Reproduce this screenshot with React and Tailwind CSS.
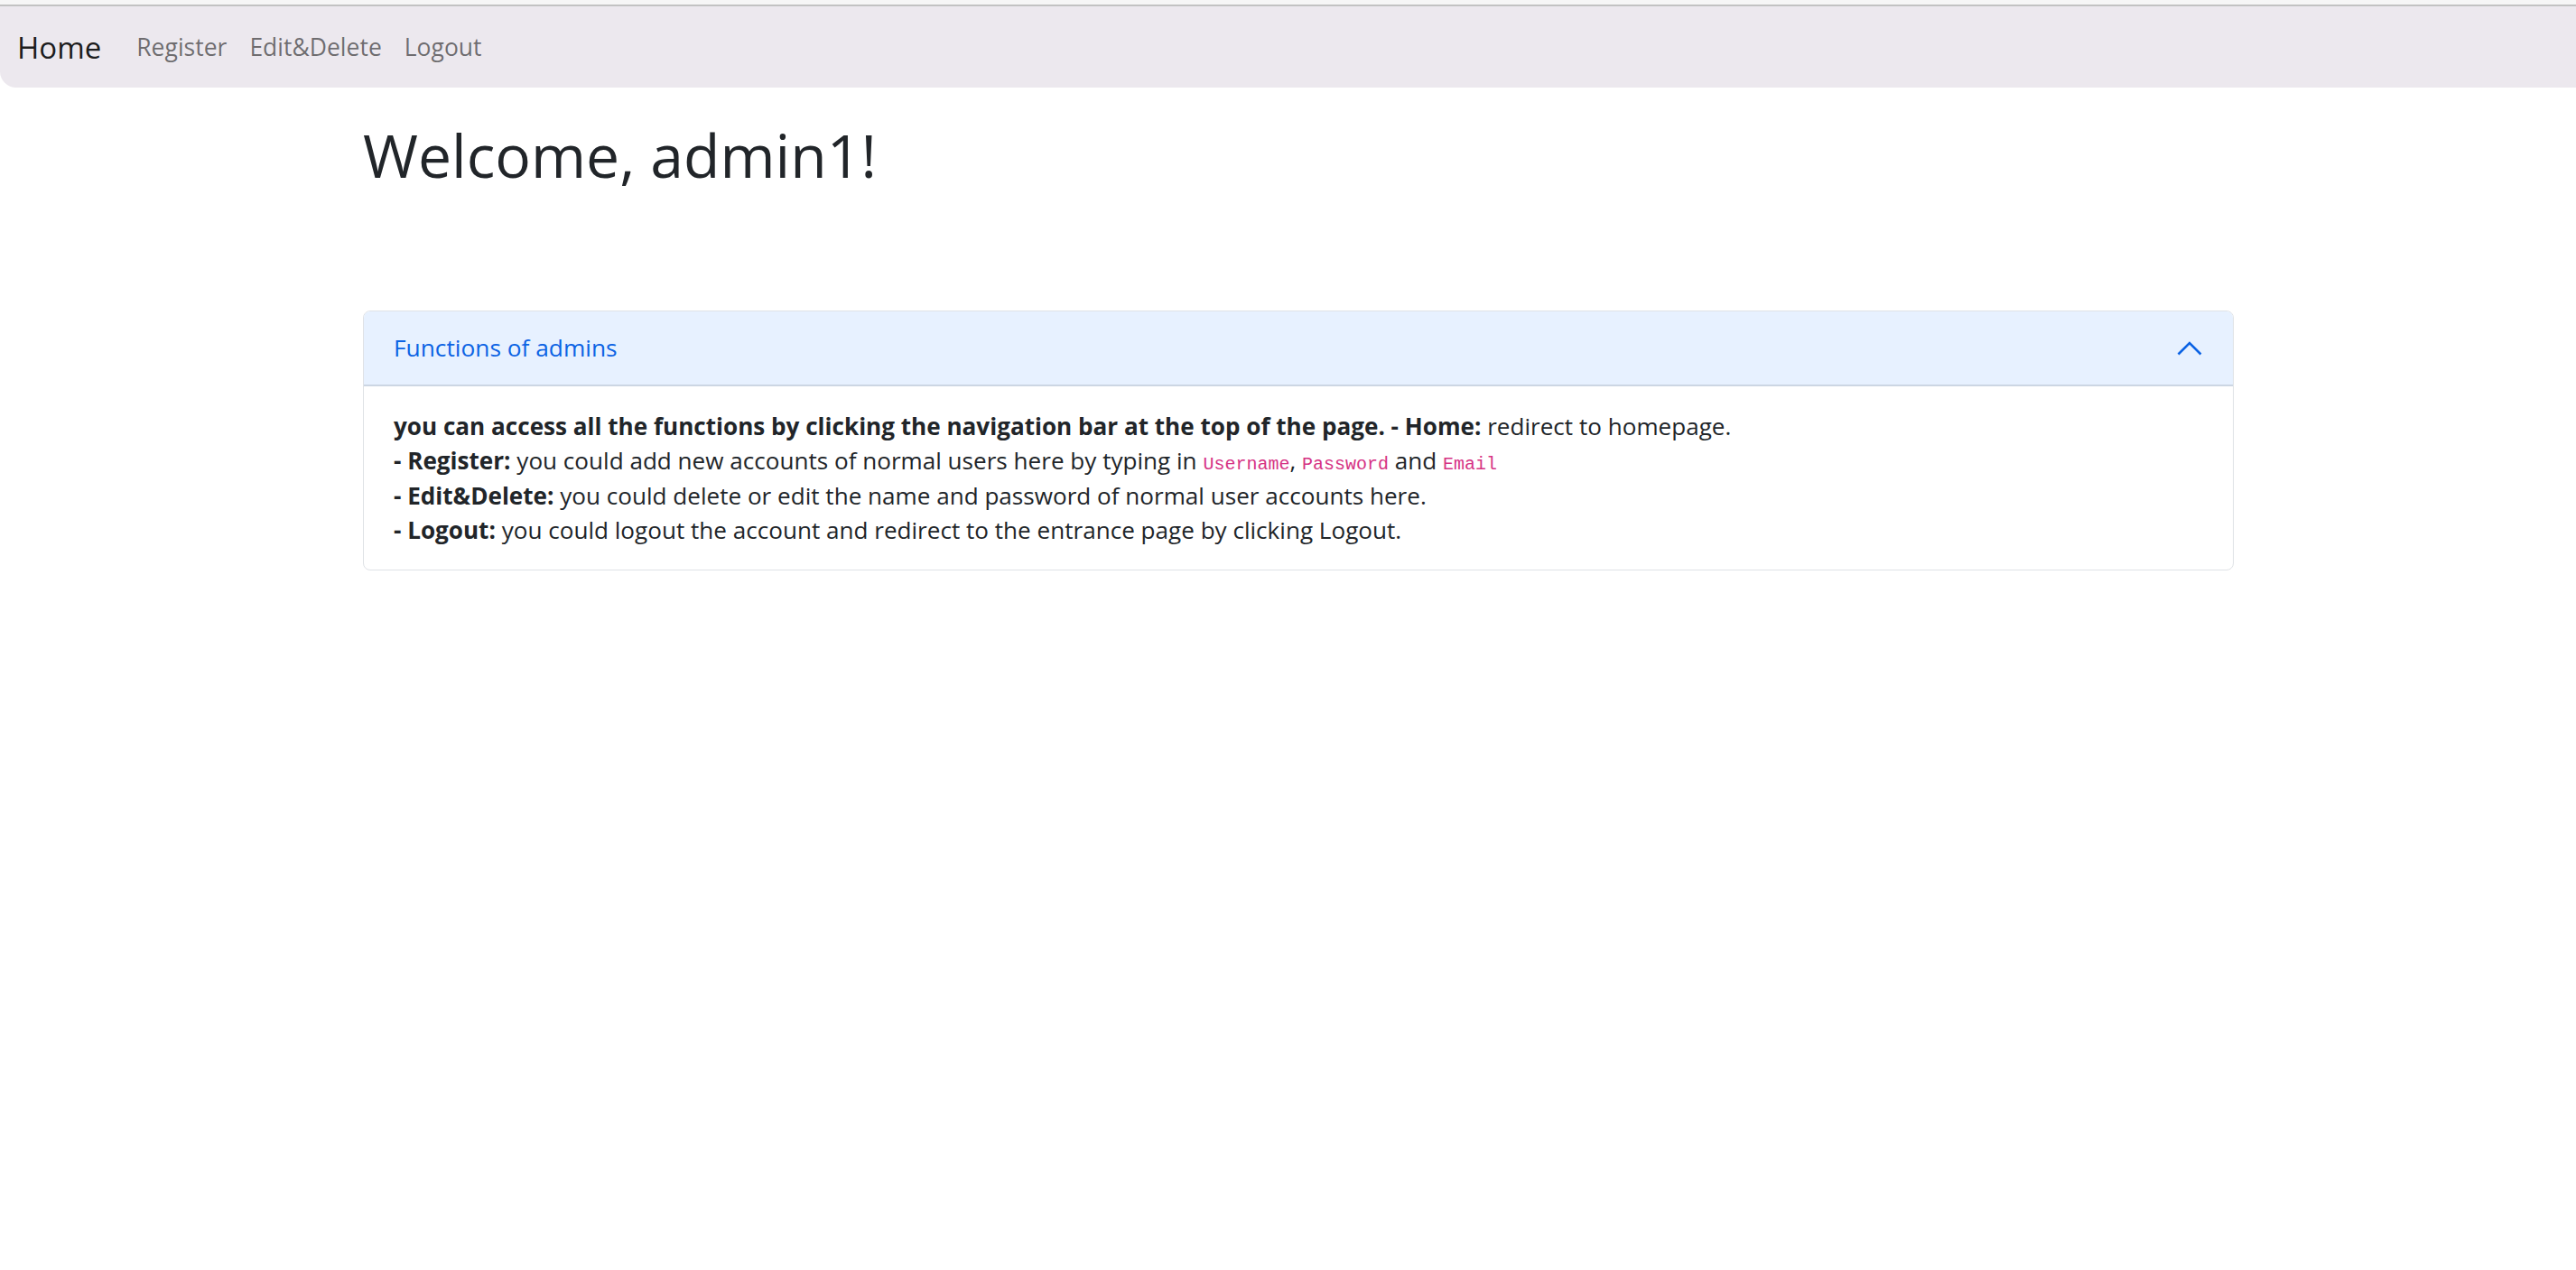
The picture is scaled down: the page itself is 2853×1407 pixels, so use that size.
import React from "react";

function Chevron() {
  return (
    <svg width="28" height="16" viewBox="0 0 28 16" fill="none" className="block">
      <path d="M1.5 14.5 L14 2 L26.5 14.5" stroke="#0c63e4" strokeWidth="2.6" strokeLinecap="butt" strokeLinejoin="miter" />
    </svg>
  );
}

function Code({ children }) {
  return (
    <code className="font-['Liberation_Mono',monospace] text-[20px] leading-none text-[#d63384]">{children}</code>
  );
}

export default function App() {
  return (
    <div className="min-h-screen bg-white font-['Open_Sans',sans-serif] text-[#212529]">
      <div className="h-[5px] bg-[#f6f6f6]" />
      <div className="h-[2px] bg-[#c2c2c2]" />
      <nav className="h-[90px] bg-[#ece8ee] rounded-bl-[18px] flex items-center pl-[19px]">
        <span className="text-[33px] text-[rgba(0,0,0,0.9)] mr-[39px] leading-none">Home</span>
        <div className="flex items-center gap-[25px] text-[26.5px] text-[rgba(0,0,0,0.55)] leading-none">
          <span>Register</span>
          <span>Edit&amp;Delete</span>
          <span>Logout</span>
        </div>
      </nav>
      <main className="ml-[402px] w-[2072px]">
        <h1 className="mt-[33px] text-[66px] leading-[82px] font-normal">Welcome, admin1!</h1>
        <div className="mt-[132px] border border-[#dfe2e6] rounded-[8px] overflow-hidden">
          <div className="h-[83px] bg-[#e7f1ff] border-b-2 border-[#ccd6e3] flex items-center justify-between pl-[33px] pr-[34px]">
            <span className="text-[26.3px] text-[#0c63e4]">Functions of admins</span>
            <Chevron />
          </div>
          <div className="pt-[25px] pb-[24px] px-[33px] text-[26.1px] leading-[38.4px]">
            <div>
              <b className="font-bold">you can access all the functions by clicking the navigation bar at the top of the page. - Home:</b> redirect to homepage.
            </div>
            <div>
              <b className="font-bold">- Register:</b> you could add new accounts of normal users here by typing in <Code>Username</Code>, <Code>Password</Code> and <Code>Email</Code>
            </div>
            <div>
              <b className="font-bold">- Edit&amp;Delete:</b> you could delete or edit the name and password of normal user accounts here.
            </div>
            <div>
              <b className="font-bold">- Logout:</b> you could logout the account and redirect to the entrance page by clicking Logout.
            </div>
          </div>
        </div>
      </main>
    </div>
  );
}
